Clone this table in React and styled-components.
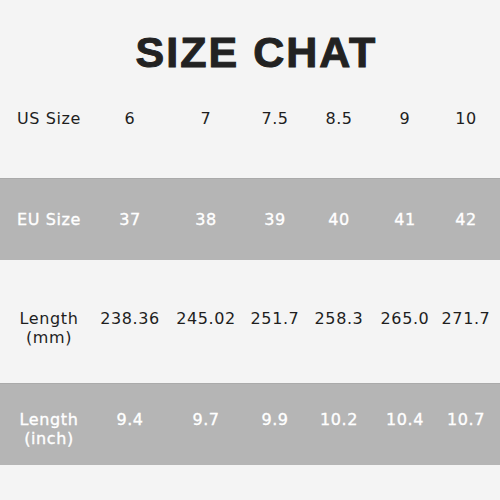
import React from 'react';
import styled, { createGlobalStyle } from 'styled-components';

const GlobalStyle = createGlobalStyle`
  html, body {
    margin: 0;
    padding: 0;
    background: #f4f4f4;
  }
`;

const Page = styled.div`
  width: 500px;
  height: 500px;
  background: #f4f4f4;
  font-family: "DejaVu Sans", "Liberation Sans", sans-serif;
  color: #1e1e1e;
  overflow: hidden;
`;

const Title = styled.h1`
  margin: 0;
  padding: 31px 0 0 13px;
  height: 43px;
  font-family: "Liberation Sans", Arial, sans-serif;
  font-size: 43px;
  line-height: 43px;
  font-weight: 700;
  letter-spacing: 2px;
  text-align: center;
  color: #222;
  -webkit-text-stroke: 1px #222;
`;

const Row = styled.div`
  display: grid;
  grid-template-columns: 98px 64px 88px 50px 78px 54px 68px;
  height: ${(p) => p.$height}px;
  box-sizing: border-box;
  padding: ${(p) => p.$padTop || 0}px 0 ${(p) => p.$padBottom || 0}px;
  align-items: ${(p) => (p.$top ? 'start' : 'center')};
  background: ${(p) => (p.$shaded ? '#b5b5b5' : 'transparent')};
  border-top: ${(p) => (p.$shaded ? '1px solid #aaaaaa' : 'none')};
  color: ${(p) => (p.$shaded ? '#ffffff' : '#1e1e1e')};
  -webkit-text-stroke: ${(p) => (p.$shaded ? '0.35px #ffffff' : '0')};
`;

const Cell = styled.div`
  display: flex;
  justify-content: center;
  text-align: center;
  white-space: nowrap;
  font-size: 16px;
  line-height: 19px;
  letter-spacing: 0.6px;
`;

const rows = [
  { label: ['US Size'], values: ['6', '7', '7.5', '8.5', '9', '10'], height: 104, padBottom: 16 },
  { label: ['EU Size'], values: ['37', '38', '39', '40', '41', '42'], height: 82, shaded: true },
  {
    label: ['Length', '(mm)'],
    values: ['238.36', '245.02', '251.7', '258.3', '265.0', '271.7'],
    height: 123,
    top: true,
    padTop: 49,
  },
  {
    label: ['Length', '(inch)'],
    values: ['9.4', '9.7', '9.9', '10.2', '10.4', '10.7'],
    height: 82,
    shaded: true,
    top: true,
    padTop: 26,
  },
];

export default function App() {
  return (
    <Page>
      <GlobalStyle />
      <Title>SIZE CHAT</Title>
      {rows.map((r) => (
        <Row
          key={r.label.join(' ')}
          $height={r.height}
          $padTop={r.padTop}
          $padBottom={r.padBottom}
          $shaded={r.shaded}
          $top={r.top}
        >
          <Cell>
            <span>
              {r.label.map((l, i) => (
                <React.Fragment key={l}>
                  {i > 0 && <br />}
                  {l}
                </React.Fragment>
              ))}
            </span>
          </Cell>
          {r.values.map((v, i) => (
            <Cell key={i}>{v}</Cell>
          ))}
        </Row>
      ))}
    </Page>
  );
}
